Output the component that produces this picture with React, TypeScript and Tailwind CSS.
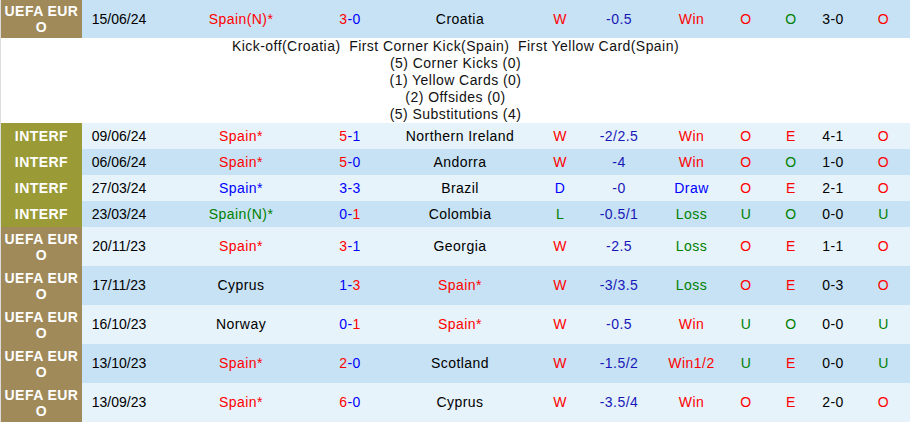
type Row = {
  comp: "UEFA EURO" | "INTERF";
  date: string;
  home: string;
  homeColor: string;
  hs: number;
  as: number;
  away: string;
  awayColor: string;
  res: "W" | "D" | "L";
  hcap: string;
  hres: string;
  ou: "O" | "U";
  oe: "O" | "E";
  ht: string;
  htou: "O" | "U";
};

const RED = "text-[#ff0000]";
const BLUE = "text-[#0000ff]";
const GREEN = "text-[#008000]";
const DARK = "text-[#000000]";

const rows: Row[] = [
  { comp: "UEFA EURO", date: "15/06/24", home: "Spain(N)*", homeColor: RED, hs: 3, as: 0, away: "Croatia", awayColor: DARK, res: "W", hcap: "-0.5", hres: "Win", ou: "O", oe: "O", ht: "3-0", htou: "O" },
  { comp: "INTERF", date: "09/06/24", home: "Spain*", homeColor: RED, hs: 5, as: 1, away: "Northern Ireland", awayColor: DARK, res: "W", hcap: "-2/2.5", hres: "Win", ou: "O", oe: "E", ht: "4-1", htou: "O" },
  { comp: "INTERF", date: "06/06/24", home: "Spain*", homeColor: RED, hs: 5, as: 0, away: "Andorra", awayColor: DARK, res: "W", hcap: "-4", hres: "Win", ou: "O", oe: "O", ht: "1-0", htou: "O" },
  { comp: "INTERF", date: "27/03/24", home: "Spain*", homeColor: BLUE, hs: 3, as: 3, away: "Brazil", awayColor: DARK, res: "D", hcap: "-0", hres: "Draw", ou: "O", oe: "E", ht: "2-1", htou: "O" },
  { comp: "INTERF", date: "23/03/24", home: "Spain(N)*", homeColor: GREEN, hs: 0, as: 1, away: "Colombia", awayColor: DARK, res: "L", hcap: "-0.5/1", hres: "Loss", ou: "U", oe: "O", ht: "0-0", htou: "U" },
  { comp: "UEFA EURO", date: "20/11/23", home: "Spain*", homeColor: RED, hs: 3, as: 1, away: "Georgia", awayColor: DARK, res: "W", hcap: "-2.5", hres: "Loss", ou: "O", oe: "E", ht: "1-1", htou: "O" },
  { comp: "UEFA EURO", date: "17/11/23", home: "Cyprus", homeColor: DARK, hs: 1, as: 3, away: "Spain*", awayColor: RED, res: "W", hcap: "-3/3.5", hres: "Loss", ou: "O", oe: "E", ht: "0-3", htou: "O" },
  { comp: "UEFA EURO", date: "16/10/23", home: "Norway", homeColor: DARK, hs: 0, as: 1, away: "Spain*", awayColor: RED, res: "W", hcap: "-0.5", hres: "Win", ou: "U", oe: "O", ht: "0-0", htou: "U" },
  { comp: "UEFA EURO", date: "13/10/23", home: "Spain*", homeColor: RED, hs: 2, as: 0, away: "Scotland", awayColor: DARK, res: "W", hcap: "-1.5/2", hres: "Win1/2", ou: "U", oe: "E", ht: "0-0", htou: "U" },
  { comp: "UEFA EURO", date: "13/09/23", home: "Spain*", homeColor: RED, hs: 6, as: 0, away: "Cyprus", awayColor: DARK, res: "W", hcap: "-3.5/4", hres: "Win", ou: "O", oe: "E", ht: "2-0", htou: "O" },
];

const resColor = { W: RED, D: BLUE, L: GREEN };
const hresColor: Record<string, string> = { Win: RED, "Win1/2": RED, Draw: BLUE, Loss: GREEN };

const GRID =
  "grid grid-cols-[81px_74px_170px_48px_172px_28px_90px_55px_54px_36px_48px_53px] items-center text-center";

function MatchRow({ r, dark, first }: { r: Row; dark: boolean; first?: boolean }) {
  const euro = r.comp === "UEFA EURO";
  const h = first ? "h-[38px]" : euro ? "h-[39px]" : "h-[26px]";
  const hsColor = r.hs > r.as ? RED : BLUE;
  const asColor = r.as > r.hs ? RED : BLUE;
  return (
    <div className={`${GRID} ${h} ${dark ? "bg-[#c7e2f4]" : "bg-[#e6f3fb]"}`}>
      <div
        className={`flex h-full items-center justify-center px-[2px] text-[14px] leading-[16px] font-bold break-all text-white ${
          euro ? "bg-[#a08a5a]" : "bg-[#9a9a36]"
        }`}
      >
        {r.comp}
      </div>
      <div className={`${DARK} tracking-normal`}>{r.date}</div>
      <div className={r.homeColor}>{r.home}</div>
      <div>
        <span className={hsColor}>{r.hs}</span>
        <span className={BLUE}>-</span>
        <span className={asColor}>{r.as}</span>
      </div>
      <div className={r.awayColor}>{r.away}</div>
      <div className={resColor[r.res]}>{r.res}</div>
      <div className="text-[#1818b8]">{r.hcap}</div>
      <div className={hresColor[r.hres]}>{r.hres}</div>
      <div className={r.ou === "O" ? RED : GREEN}>{r.ou}</div>
      <div className={r.oe === "E" ? RED : GREEN}>{r.oe}</div>
      <div className={DARK}>{r.ht}</div>
      <div className={r.htou === "O" ? RED : GREEN}>{r.htou}</div>
    </div>
  );
}

export default function App() {
  return (
    <div className="h-[422px] w-[911px] overflow-hidden bg-white font-['Liberation_Sans',Arial,sans-serif] text-[14px] tracking-[0.45px]">
      <div className="w-[910px] border-l border-[#dcdcdc]">
        <MatchRow r={rows[0]} dark first />

        {/* Match details */}
        <div className="bg-white text-center text-[14px] leading-[17px] text-[#111]">
          <p className="whitespace-pre">{"Kick-off(Croatia)  First Corner Kick(Spain)  First Yellow Card(Spain)"}</p>
          <p>(5) Corner Kicks (0)</p>
          <p>(1) Yellow Cards (0)</p>
          <p>(2) Offsides (0)</p>
          <p>(5) Substitutions (4)</p>
        </div>

        {rows.slice(1).map((r, i) => (
          <MatchRow key={r.date + i} r={r} dark={i % 2 === 1} />
        ))}
      </div>
    </div>
  );
}
